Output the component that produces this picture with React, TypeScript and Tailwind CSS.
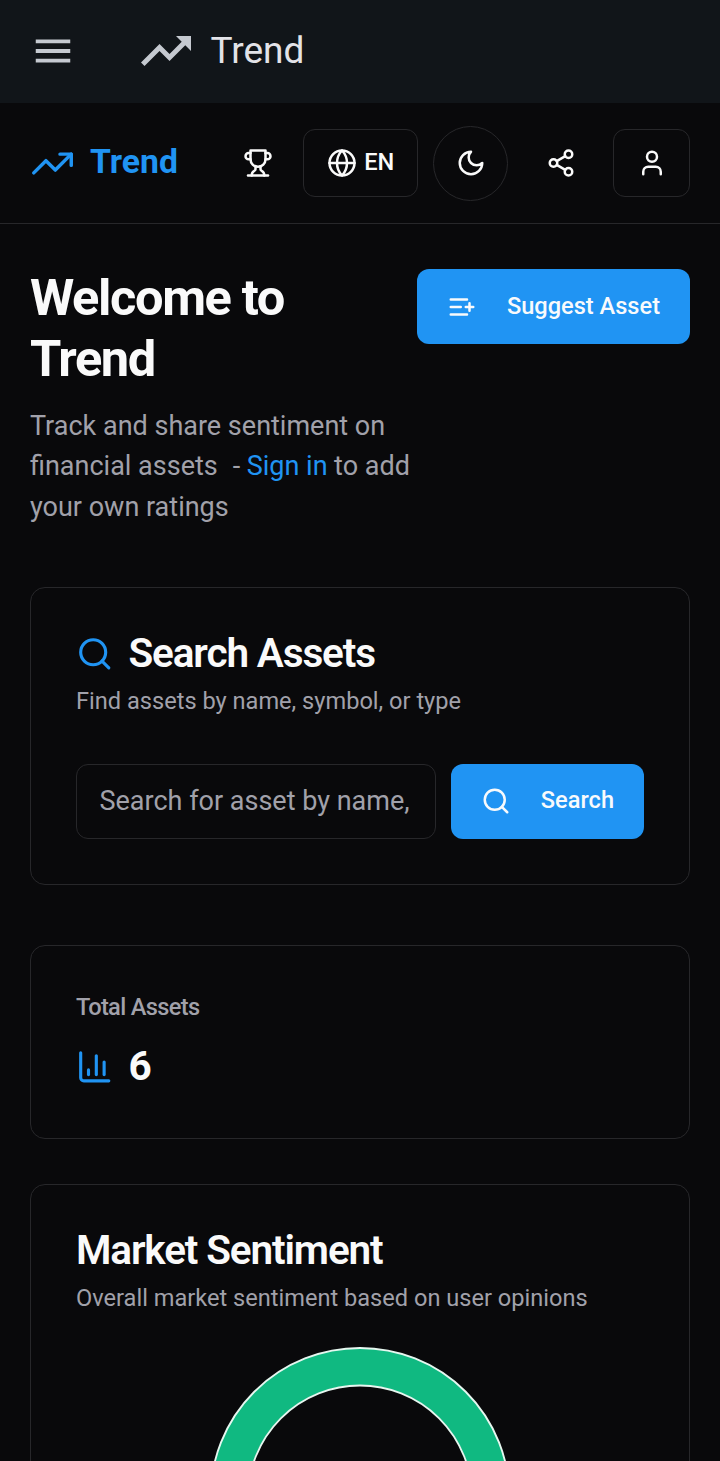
import type { ReactNode } from 'react';
import { Globe, Search, Share2, TrendingUp, User } from 'lucide-react';
import { MdMenu, MdTrendingUp } from 'react-icons/md';

function LineIcon({ size, children }: { size: number; children: ReactNode }) {
  return (
    <svg
      width={size}
      height={size}
      viewBox="0 0 24 24"
      fill="none"
      stroke="currentColor"
      strokeWidth="2"
      strokeLinecap="round"
      strokeLinejoin="round"
      className="shrink-0"
    >
      {children}
    </svg>
  );
}

function TopBar() {
  return (
    <div className="flex h-[103px] shrink-0 items-center bg-[#111519] pl-[29.5px] text-[#c5c9d0]">
      <MdMenu size={46} className="mb-[2px] shrink-0" />
      <MdTrendingUp size={60} className="mb-px ml-[60px] shrink-0" />
      <span className="mb-[2px] ml-[15px] text-[37px] leading-none text-[#e3e3e8]">Trend</span>
    </div>
  );
}

function Header() {
  return (
    <header className="flex h-[121px] shrink-0 items-center justify-between border-b border-[#27272a] px-[30px]">
      <a className="flex items-center gap-[15px] text-[#2094f3]">
        <TrendingUp size={45} strokeWidth={1.85} className="shrink-0" />
        <span className="mb-[3px] text-[33.75px] leading-none font-bold">Trend</span>
      </a>
      <nav className="flex items-center gap-[15px]">
        <button className="flex h-[68px] w-[60px] items-center justify-center">
          <LineIcon size={30}>
            <path d="M6 9H4.5a2.5 2.5 0 0 1 0-5H6" />
            <path d="M18 9h1.5a2.5 2.5 0 0 0 0-5H18" />
            <path d="M4 22h16" />
            <path d="M10 14.66V17c0 .55-.47.98-.97 1.21C7.85 18.75 7 20.24 7 22" />
            <path d="M14 14.66V17c0 .55.47.98.97 1.21C16.15 18.75 17 20.24 17 22" />
            <path d="M18 2H6v7a6 6 0 0 0 12 0V2Z" />
          </LineIcon>
        </button>
        <button className="flex h-[68px] w-[115px] items-center justify-center gap-[7.5px] rounded-[12px] border border-[#27272a]">
          <Globe size={30} />
          <span className="text-[23.6px] leading-none font-medium">EN</span>
        </button>
        <button className="flex size-[75px] items-center justify-center rounded-full border border-[#27272a]">
          <LineIcon size={30}>
            <path d="M12 3a6 6 0 0 0 9 9 9 9 0 1 1-9-9Z" />
          </LineIcon>
        </button>
        <button className="flex size-[75px] items-center justify-center">
          <Share2 size={30} />
        </button>
        <button className="flex h-[68px] w-[77px] items-center justify-center rounded-[12px] border border-[#27272a]">
          <User size={30} />
        </button>
      </nav>
    </header>
  );
}

function Card({ className, children }: { className: string; children: ReactNode }) {
  return <section className={`rounded-[15px] border border-[#27272a] px-[45px] ${className}`}>{children}</section>;
}

function SentimentRing() {
  return (
    <svg width="302" height="302" viewBox="0 0 302 302" className="mx-auto block">
      <circle cx="151" cy="151.5" r="131" fill="none" stroke="#10b981" strokeWidth="37" />
      <circle cx="151" cy="151.5" r="149.5" fill="none" stroke="#e6f7f0" strokeWidth="1.875" />
      <circle cx="151" cy="151.5" r="112" fill="none" stroke="#e6f7f0" strokeWidth="1.875" />
    </svg>
  );
}

export default function App() {
  return (
    <div className="flex h-[1461px] flex-col overflow-hidden bg-[#09090b] font-['Roboto',sans-serif] text-[#fafafa]">
      <TopBar />
      <Header />
      <main className="flex flex-col px-[30px] pt-[44px]">
        <div className="flex items-start justify-between">
          <div className="w-[387px]">
            <h1 className="text-[50.6px] leading-[60.75px] font-bold tracking-[-0.0275em]">Welcome to Trend</h1>
            <p className="mt-[16px] text-[27px] leading-[40.5px] text-[#a1a1aa]">
              <span className="block">Track and share sentiment on</span>
              <span className="flex gap-[6.5px]">
                <span className="mr-[8.5px]">financial assets</span>
                <span>-</span>
                <a className="text-[#2094f3]">Sign in</a>
                <span>to add</span>
              </span>
              <span className="block">your own ratings</span>
            </p>
          </div>
          <button className="mt-px flex h-[75px] w-[273px] items-center justify-between rounded-[12px] bg-[#2094f3] px-[30px] text-[#f8fafc]">
            <LineIcon size={30}>
              <path d="M11 12H3M16 6H3M16 18H3M18 9v6M21 12h-6" />
            </LineIcon>
            <span className="mt-px text-[23.6px] leading-none font-medium">Suggest Asset</span>
          </button>
        </div>

        <Card className="mt-[60px] h-[298px] pt-[45px]">
          <div className="flex h-[41px] items-center gap-[15px]">
            <Search size={37.5} className="shrink-0 text-[#2094f3]" />
            <h2 className="text-[40.5px] leading-none font-semibold tracking-[-0.028em]">Search Assets</h2>
          </div>
          <p className="mt-[10px] text-[23.6px] leading-[34px] text-[#a1a1aa]">Find assets by name, symbol, or type</p>
          <div className="mt-[46px] flex gap-[15px]">
            <div className="flex h-[75px] w-[360px] items-center overflow-hidden rounded-[12px] border border-[#27272a] px-[22.5px]">
              <span className="text-[27px] whitespace-nowrap text-[#a1a1aa]">Search for asset by name,</span>
            </div>
            <button className="flex h-[75px] flex-1 items-center justify-between rounded-[12px] bg-[#2094f3] px-[30px] text-[#f8fafc]">
              <Search size={30} className="mb-px" />
              <span className="mb-[2px] text-[23.6px] leading-none font-medium">Search</span>
            </button>
          </div>
        </Card>

        <Card className="mt-[60px] h-[194px] pt-[45px]">
          <h3 className="text-[23.6px] leading-[33px] font-medium tracking-[-0.027em] text-[#a1a1aa]">Total Assets</h3>
          <div className="mt-[17px] flex h-[51px] items-center gap-[15px]">
            <span className="text-[#2094f3]">
              <LineIcon size={37.5}>
                <path d="M3 3v16a2 2 0 0 0 2 2h16" />
                <path d="M18 17V9" />
                <path d="M13 17V5" />
                <path d="M8 17v-3" />
              </LineIcon>
            </span>
            <span className="mb-px text-[40.5px] leading-none font-bold">6</span>
          </div>
        </Card>

        <Card className="mt-[45px] h-[560px] pt-[45px]">
          <h2 className="text-[40.5px] leading-[41px] font-semibold tracking-[-0.028em]">Market Sentiment</h2>
          <p className="mt-[10px] mb-[31px] text-[23.6px] leading-[34px] text-[#a1a1aa]">
            Overall market sentiment based on user opinions
          </p>
          <SentimentRing />
        </Card>
      </main>
    </div>
  );
}
